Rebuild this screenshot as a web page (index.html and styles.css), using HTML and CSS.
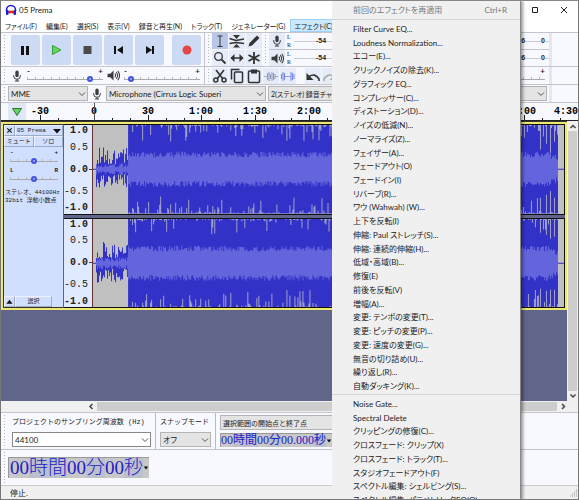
FILE: index.html
```html
<!DOCTYPE html>
<html lang="ja">
<head>
<meta charset="utf-8">
<title>05 Prema</title>
<link rel="stylesheet" href="styles.css">
</head>
<body>
<svg class="defs" aria-hidden="true">
  <symbol id="mic" viewBox="0 0 12 14"><rect x="4" y="0.5" width="4" height="8" rx="2" fill="#3c3c3c"/><path d="M2 6v1a4 4 0 0 0 8 0V6M6 11v2M3.5 13h5" fill="none" stroke="#3c3c3c" stroke-width="1.2"/></symbol>
  <symbol id="speaker" viewBox="0 0 14 12"><path d="M0.5 4h3L7 0.5v11L3.5 8h-3z" fill="#3c3c3c"/><path d="M8.5 4q1.5 2 0 4M10 2.3q3 3.700 0 7.400M11.600 0.800q4 5.200 0 10.400" fill="none" stroke="#3c3c3c" stroke-width="1.100"/></symbol>
  <symbol id="chevron" viewBox="0 0 8 8"><path d="M1 2.500l3 3 3-3" fill="none" stroke="#555" stroke-width="1"/></symbol>
</svg>

<header class="titlebar">
  <svg class="logo" viewBox="0 0 12 12"><path d="M1.500 7V6a4.500 4.500 0 0 1 9 0v1" fill="none" stroke="#1a1ae0" stroke-width="1.600"/><path d="M3 8l1.500-2 1.500 1 1.500-1L9 8l-1.500 2L6 9l-1.500 1z" fill="#f70"/><path d="M3 8h6" stroke="#e11" stroke-width="1.500"/><rect x="1" y="6" width="2.500" height="5" rx="1" fill="#1a1ae0"/><rect x="8.500" y="6" width="2.500" height="5" rx="1" fill="#1a1ae0"/></svg>
  <span class="title">05 Prema</span>
  <button class="win" aria-label="最小化"><svg viewBox="0 0 8 8"><path d="M0.500 4h7" stroke="#222" fill="none"/></svg></button>
  <button class="win" aria-label="最大化"><svg viewBox="0 0 8 8"><path d="M1.500 1.500h5v5h-5z" stroke="#222" fill="none"/></svg></button>
  <button class="win" aria-label="閉じる"><svg viewBox="0 0 8 8"><path d="M1 1l6 6M7 1L1 7" stroke="#222" fill="none"/></svg></button>
</header>

<nav class="menubar">
  <button>ファイル(F)</button><button>編集(E)</button><button>選択(S)</button><button>表示(V)</button><button>録音と再生(N)</button><button>トラック(T)</button><button>ジェネレーター(G)</button><button class="open">エフェクト(C)</button>
</nav>

<section class="tools">
  <div class="left">
    <div class="transport">
      <i class="grip"></i>
      <button aria-label="一時停止"><svg viewBox="0 0 29 30"><path d="M10 11h3v9h-3zM15 11h3v9h-3z" fill="#111"/></svg></button>
      <button aria-label="再生"><svg viewBox="0 0 29 30"><path d="M10.500 10.500v9l8.500-4.500z" fill="#63d663" stroke="#3a9c3a"/></svg></button>
      <button aria-label="停止"><svg viewBox="0 0 29 30"><path d="M10.500 11h8v8h-8z" fill="#4c4c4c"/></svg></button>
      <button aria-label="先頭へ"><svg viewBox="0 0 29 30"><path d="M10 11h2v8h-2zM19 11v8l-6-4z" fill="#111"/></svg></button>
      <button aria-label="末尾へ"><svg viewBox="0 0 29 30"><path d="M17 11h2v8h-2zM11 11v8l6-4z" fill="#111"/></svg></button>
      <button class="rec" aria-label="録音"><svg viewBox="0 0 29 30"><circle cx="15" cy="15" r="4.500" fill="#e54545"/></svg></button>
    </div>
    <div class="mixer">
      <i class="grip"></i>
      <svg class="i-mic"><use href="#mic"/></svg>
      <label class="slide"><span>-</span><span>+</span><input type="range" min="0" max="100" value="86" aria-label="録音レベル"></label>
      <svg class="i-spk"><use href="#speaker"/></svg>
      <label class="slide"><span>-</span><span>+</span><input type="range" min="0" max="100" value="5" aria-label="再生レベル"></label>
    </div>
  </div>
  <div class="right">
    <div class="upper">
      <i class="grip"></i>
      <div class="toolgrid">
        <button class="on" aria-label="選択ツール"><svg viewBox="0 0 16 16"><path d="M5.500 3h5M5.500 13.500h5M8 3v10.500" stroke="#333" fill="none"/></svg></button>
        <button aria-label="エンベロープ"><svg viewBox="0 0 16 16"><path d="M0.500 5.500L7 7.500 15 6M0.500 10.500l6.500-1 8 1" stroke="#333" stroke-width="1.500" fill="none"/><path d="M4 2h7L7.500 6zM4 14.500h7L7.500 11z" fill="#333"/></svg></button>
        <button aria-label="ドロー"><svg viewBox="0 0 16 16"><path d="M2.500 13.500l1-3.500L11 2.500l2.500 2.500L6 12.500z" fill="#333"/></svg></button>
        <button aria-label="ズーム"><svg viewBox="0 0 16 16"><circle cx="6.500" cy="6.500" r="3.800" stroke="#333" stroke-width="1.300" fill="none"/><path d="M9.500 9.500l4 4" stroke="#333" stroke-width="1.800"/></svg></button>
        <button aria-label="タイムシフト"><svg viewBox="0 0 16 16"><path d="M2 8h12" stroke="#333" stroke-width="1.500"/><path d="M1.500 8l4-4v8zM14.500 8l-4-4v8z" fill="#333"/></svg></button>
        <button aria-label="マルチツール"><svg viewBox="0 0 16 16"><path d="M8 2v12M2.500 5l11 6M13.500 5l-11 6" stroke="#333" stroke-width="1.800" fill="none"/></svg></button>
      </div>
      <i class="grip"></i>
      <div class="meters">
        <div class="meter"><button aria-label="録音メーター"><svg class="i-mic"><use href="#mic"/></svg></button><span class="lr"><b>L</b><b>R</b></span><span class="scale"><em>-54</em><em>-6</em><em>0</em></span></div>
        <div class="meter"><button aria-label="再生メーター"><svg class="i-spk"><use href="#speaker"/></svg></button><span class="lr"><b>L</b><b>R</b></span><span class="scale"><em>-54</em><em>-6</em><em>0</em></span></div>
      </div>
      <i class="edge"></i>
    </div>
    <div class="edit">
      <i class="grip"></i>
      <button aria-label="切り取り"><svg viewBox="0 0 16 16"><path d="M4 2l7 9M12 2L5 11" stroke="#333" stroke-width="1.600"/><circle cx="3.800" cy="12" r="2" stroke="#333" stroke-width="1.500" fill="none"/><circle cx="12" cy="12" r="2" stroke="#333" stroke-width="1.500" fill="none"/></svg></button>
      <button aria-label="コピー"><svg viewBox="0 0 16 16"><path d="M2.500 11.500v-10h8" stroke="#333" stroke-width="1.500" fill="none"/><rect x="5.500" y="4" width="8" height="10.500" rx="1" stroke="#333" stroke-width="1.500" fill="none"/></svg></button>
      <button aria-label="貼り付け"><svg viewBox="0 0 16 16"><rect x="2.500" y="3" width="11" height="11.500" rx="1" stroke="#333" stroke-width="1.500" fill="none"/><path d="M5 1.500h6v4H5z" fill="#333"/></svg></button>
      <button aria-label="トリム"><svg viewBox="0 0 16 16"><path d="M1 8.500h3M12 8.500h3" stroke="#aab"/><path d="M4.500 5v7M6 4v9M7.500 6v5M9 4v9M10.500 5v7M12 6v5" stroke="#8e96b8"/></svg></button>
      <button aria-label="無音化"><svg viewBox="0 0 16 16"><path d="M5 8.500h6" stroke="#99c"/><path d="M1.500 6v5M3 4v9M4.500 5v7M11 4v9M12.500 5v7M14 6v5" stroke="#7484e6"/></svg></button>
      <button class="undo" aria-label="元に戻す"><svg viewBox="0 0 16 16"><path d="M4 8.500q6-4 10 2.500v2" stroke="#333" stroke-width="1.600" fill="none"/><path d="M1.500 5v7h7z" fill="#333"/></svg></button>
      <button aria-label="やり直す"><svg viewBox="0 0 16 16"><path d="M12 8.500Q6 4.500 2 11v2" stroke="#aaa" stroke-width="1.600" fill="none"/><path d="M14.500 5v7h-7z" fill="#aaa"/></svg></button>
      <label class="slide long"><span>-</span><span>+</span><input type="range" min="0" max="100" value="30" aria-label="再生速度"></label>
      <i class="edge"></i>
    </div>
  </div>
</section>

<section class="devices">
  <i class="grip"></i>
  <span class="combo host"><select aria-label="オーディオホスト"><option>MME</option></select><svg><use href="#chevron"/></svg></span>
  <svg class="i-mic"><use href="#mic"/></svg>
  <span class="combo input"><select aria-label="録音デバイス"><option>Microphone (Cirrus Logic Superi</option></select><svg><use href="#chevron"/></svg></span>
  <span class="combo chan"><select aria-label="録音チャンネル"><option>2(ステレオ) 録音チャン</option></select><svg><use href="#chevron"/></svg></span>
  <span class="combo out"><select aria-label="再生デバイス"><option></option></select><svg><use href="#chevron"/></svg></span>
  <i class="edge"></i>
</section>

<section class="timeline">
  <button aria-label="再生ヘッドを固定"><svg viewBox="0 0 12 12"><path d="M1.500 2.500h9L6 9.500z" fill="#63d663" stroke="#2d702d"/></svg></button>
  <svg class="ruler" id="ruler"></svg>
</section>

<main class="workspace">
  <div class="canvas">
    <article class="track">
      <div class="panel">
        <div class="prow"><button class="sq" aria-label="トラックを閉じる"><svg viewBox="0 0 8 8"><path d="M1.500 1.500l5 5M6.500 1.500l-5 5" stroke="#111" stroke-width="1.200"/></svg></button><button class="name">05 Prema<svg viewBox="0 0 8 8"><path d="M0 2h8L4 6.500z" fill="#111"/></svg></button></div>
        <div class="prow"><button class="half">ミュート</button><button class="half">ソロ</button></div>
        <label class="slide"><span>-</span><span>+</span><input type="range" min="0" max="100" value="49" aria-label="ゲイン"></label>
        <label class="slide"><span>L</span><span>R</span><input type="range" min="0" max="100" value="49" aria-label="パン"></label>
        <p>ステレオ、44100Hz<br>32bit 浮動小数点</p>
        <div class="prow foot"><button class="sq" aria-label="折りたたむ"><svg viewBox="0 0 8 8"><path d="M0.500 6.500h7L4 2z" fill="#111"/></svg></button><button class="sel">選択</button></div>
      </div>
      <div class="channels">
        <div class="channel"><div class="vscale"><b>1.0</b><span>0.5</span><b class="mid">0.0</b><span>-0.5</span><b>-1.0</b></div><svg class="wave" viewBox="0 0 471 90" preserveAspectRatio="none"></svg></div>
        <div class="channel"><div class="vscale"><b>1.0</b><span>0.5</span><b class="mid">0.0</b><span>-0.5</span><b>-1.0</b></div><svg class="wave" viewBox="0 0 471 90" preserveAspectRatio="none"></svg></div>
      </div>
    </article>
  </div>
  <div class="vscroll"><svg viewBox="0 0 8 8"><path d="M1.500 5.500L4 3l2.500 2.500" fill="none" stroke="#444" stroke-width="1.500"/></svg><i></i><svg viewBox="0 0 8 8"><path d="M1.500 3L4 5.500 6.500 3" fill="none" stroke="#444" stroke-width="1.500"/></svg></div>
</main>
<div class="hscroll"><svg viewBox="0 0 8 8"><path d="M5.500 1.500L3 4l2.500 2.500" fill="none" stroke="#444" stroke-width="1.500"/></svg><i></i><svg viewBox="0 0 8 8"><path d="M3 1.500L5.500 4 3 6.500" fill="none" stroke="#444" stroke-width="1.500"/></svg></div>

<section class="selection">
  <i class="grip"></i>
  <div class="field rate"><label for="rate">プロジェクトのサンプリング周波数 (Hz)</label><span class="combo white"><select id="rate"><option>44100</option></select><svg><use href="#chevron"/></svg></span></div>
  <div class="field snap"><label for="snap">スナップモード</label><span class="combo"><select id="snap"><option>オフ</option></select><svg><use href="#chevron"/></svg></span></div>
  <div class="field range"><span class="combo"><select aria-label="選択範囲"><option>選択範囲の開始点と終了点</option></select><svg><use href="#chevron"/></svg></span><output class="time">00<u>時間</u>00<u>分</u>00.000<u>秒</u><svg viewBox="0 0 8 8"><path d="M1 2h6L4 6z" fill="#111"/></svg></output></div>
</section>
<section class="position">
  <i class="grip"></i>
  <output class="time big">00<u>時間</u>00<u>分</u>00<u>秒</u><svg viewBox="0 0 8 8"><path d="M1 2h6L4 6z" fill="#111"/></svg></output>
</section>
<footer class="status"><span>停止.</span><svg viewBox="0 0 8 8"><path d="M6 1h1M4 3h1M6 3h1M2 5h1M4 5h1M6 5h1M0 7h1M2 7h1M4 7h1M6 7h1" stroke="#999"/></svg></footer>

<div class="menu" role="menu">
  <button class="repeat" role="menuitem" disabled><span>前回のエフェクトを再適用</span><span>Ctrl+R</span></button>
  <div class="group main-group">
    <button role="menuitem">Filter Curve EQ...</button>
    <button role="menuitem">Loudness Normalization...</button>
    <button role="menuitem">エコー(E)...</button>
    <button role="menuitem">クリックノイズの除去(K)...</button>
    <button role="menuitem">グラフィック EQ...</button>
    <button role="menuitem">コンプレッサー(C)...</button>
    <button role="menuitem">ディストーション(D)...</button>
    <button role="menuitem">ノイズの低減(N)...</button>
    <button role="menuitem">ノーマライズ(Z)...</button>
    <button role="menuitem">フェイザー(A)...</button>
    <button role="menuitem">フェードアウト(O)</button>
    <button role="menuitem">フェードイン(I)</button>
    <button role="menuitem">リバーブ(R)...</button>
    <button role="menuitem">ワウ (Wahwah) (W)...</button>
    <button role="menuitem">上下を反転(I)</button>
    <button role="menuitem">伸縮: Paul ストレッチ(S)...</button>
    <button role="menuitem">伸縮: 連続的伸縮(H)...</button>
    <button role="menuitem">低域・高域(B)...</button>
    <button role="menuitem">修復(E)</button>
    <button role="menuitem">前後を反転(V)</button>
    <button role="menuitem">増幅(A)...</button>
    <button role="menuitem">変更: テンポの変更(T)...</button>
    <button role="menuitem">変更: ピッチの変更(P)...</button>
    <button role="menuitem">変更: 速度の変更(G)...</button>
    <button role="menuitem">無音の切り詰め(U)...</button>
    <button role="menuitem">繰り返し(R)...</button>
    <button role="menuitem">自動ダッキング(K)...</button>
  </div>
  <div class="group plug-group">
    <button role="menuitem">Noise Gate...</button>
    <button role="menuitem">Spectral Delete</button>
    <button role="menuitem">クリッピングの修復(C)...</button>
    <button role="menuitem">クロスフェード: クリップ(X)</button>
    <button role="menuitem">クロスフェード: トラック(T)...</button>
    <button role="menuitem">スタジオフェードアウト(F)</button>
    <button role="menuitem">スペクトル編集: シェルビング(S)...</button>
    <button role="menuitem">スペクトル編集: パラメトリックEQ(Q)...</button>
  </div>
</div>
<script src="wave.js"></script>
</body>
</html>
```
FILE: wave.js
```js
const NS = "http://www.w3.org/2000/svg";

function add(parent, tag, attrs, text) {
  const node = document.createElementNS(NS, tag);
  for (const key in attrs) node.setAttribute(key, attrs[key]);
  if (text) node.textContent = text;
  parent.appendChild(node);
}

function random(seed) {
  let s = seed;
  return () => (s = (s * 16807) % 2147483647) / 2147483647;
}

function drawRuler(svg) {
  const labels = { 0: "-30", 1: "0", 2: "30", 3: "1:00", 4: "1:30", 5: "2:00", 9: "4:00", 10: "4:30" };
  const start = 14;
  const step = 53.8;
  let ticks = "";
  for (let i = 0; i <= 10; i++) {
    const x = Math.round(start + i * step);
    if (labels[i]) add(svg, "text", { x: i === 10 ? x - 12 : x, y: 11, "text-anchor": "middle" }, labels[i]);
    ticks += `M${x + 0.5} 12V17`;
    for (let k = 1; k < 3; k++) ticks += `M${Math.round(x + (k * step) / 3) + 0.5} 15V17`;
  }
  add(svg, "path", { d: ticks, stroke: "#222" });
  add(svg, "path", { d: `M${Math.round(start + step) + 0.5} 0V17`, stroke: "#555" });
}

function drawWave(svg, seed) {
  const rnd = random(seed);
  const begin = 36;
  const end = 465;
  const mid = 45;
  let peak = "";
  let rms = "";
  let gaps = "";
  for (let x = 4; x < begin; x++) {
    const up = 5 + Math.pow(rnd(), 1.4) * 17;
    const down = 5 + Math.pow(rnd(), 1.4) * 15;
    peak += `M${x + 0.5} ${(mid - up).toFixed(1)}V${(mid + down).toFixed(1)}`;
    const r = 2 + rnd() * 4;
    rms += `M${x + 0.5} ${(mid - r).toFixed(1)}V${(mid + r).toFixed(1)}`;
  }
  for (let x = begin; x < end; x++) {
    const fade = x > 455 ? (x - 455) / 2 : 0;
    const up = 12 + rnd() * 6 - fade;
    const down = 12 + rnd() * 6 - fade;
    rms += `M${x + 0.5} ${(mid - up).toFixed(1)}V${(mid + down).toFixed(1)}`;
    if (rnd() > 0.62) gaps += `M${x + 0.5} 0V${(1 + Math.pow(rnd(), 4) * 16).toFixed(1)}`;
    if (rnd() > 0.6) gaps += `M${x + 0.5} 90V${(89 - Math.pow(rnd(), 3) * 17).toFixed(1)}`;
  }
  for (const x of [447, 453, 457, 461]) {
    gaps += `M${x + 0.5} 0V${Math.round(12 + rnd() * 18)}M${x + 0.5} 90V${Math.round(76 - rnd() * 12)}`;
  }
  add(svg, "path", { d: peak, stroke: "#3232c8" });
  add(svg, "rect", { x: begin, y: 0, width: end - begin, height: 90, fill: "#3232c8" });
  add(svg, "path", { d: gaps, stroke: "#a0a0c8" });
  add(svg, "path", { d: rms, stroke: "#6464dc" });
  add(svg, "path", { d: `M0 45H4M${end} 45H471`, stroke: "#3232c8" });
  add(svg, "path", { d: "M0.5 0V90", stroke: "#633" });
}

drawRuler(document.getElementById("ruler"));
document.querySelectorAll(".wave").forEach((svg, i) => drawWave(svg, 4211 + i * 977));
```
FILE: styles.css
```css
* { box-sizing: border-box; }
body {
  margin: 0;
  height: 100vh;
  display: flex;
  flex-direction: column;
  overflow: hidden;
  position: relative;
  background: #fff;
  border: 1px solid #777;
  border-top-color: #888;
  color: #222;
  font: 8px/12px "Lato", "Noto Sans CJK JP", sans-serif;
  font-feature-settings: "palt";
}
button, select, input, output { font: inherit; font-feature-settings: inherit; color: inherit; margin: 0; }
button { border: 0; padding: 0; background: none; white-space: nowrap; }
svg { display: block; flex: none; }
.defs { position: absolute; width: 0; height: 0; }

.titlebar { display: flex; align-items: center; height: 18px; padding-left: 4px; flex: none; }
.logo { width: 12px; height: 12px; }
.title { margin-left: 2px; flex: 1; }
.win { width: 29px; display: flex; justify-content: center; }
.win svg { width: 8px; height: 8px; }
.menubar { display: flex; height: 13px; flex: none; font-size: 7px; }
.menubar button { padding: 0 5px 0 4px; }
.menubar .open { background: #cce8ff; box-shadow: inset 0 0 0 1px #99d1ff; }

.grip { width: 4px; align-self: stretch; margin: 1px 1px 1px 2px; flex: none; background: radial-gradient(circle, #b4b4bc 1px, transparent 1px) 0 0 / 3px 3px; }
.edge { width: 29px; flex: none; align-self: stretch; border-left: 3px solid #e6e6ee; }
.i-mic { width: 10px; height: 12px; }
.i-spk { width: 13px; height: 11px; }

.tools { display: flex; flex: none; background: #f8f9ff; border-top: 1px solid #c4c4cc; }
.left { width: 204px; flex: none; border-right: 1px solid #c4c4cc; }
.transport { display: flex; align-items: center; gap: 2px; height: 34px; border-bottom: 1px solid #c4c4cc; }
.transport .grip { margin-right: 2px; }
.transport button { width: 29px; height: 30px; background: #cddaf3; border-radius: 2px; }
.transport .rec { margin-left: 6px; }
.mixer { display: flex; align-items: center; height: 17px; }
.mixer .i-mic { margin: 0 5px 0 4px; }
.mixer .i-spk { margin: 0 4px; }

.slide { display: grid; grid-template-columns: 1fr 1fr; width: 76px; height: 15px; line-height: 6px; font-weight: bold; }
.slide span + span { text-align: right; }
.slide input { grid-column: 1 / 3; appearance: none; width: 100%; height: 8px; background: none; }
.slide input::-webkit-slider-runnable-track { height: 6px; background: linear-gradient(#aaa, #aaa) 0 3px / 100% 1px no-repeat, repeating-linear-gradient(90deg, #bbb 0 1px, transparent 1px 8px) 0 1px / 100% 2px no-repeat; }
.slide input::-webkit-slider-thumb { appearance: none; width: 6px; height: 6px; border-radius: 50%; background: #aab4f4; border: 2px solid #4452e0; }

.right { flex: 1; min-width: 0; }
.upper { display: flex; height: 34px; border-bottom: 1px solid #c4c4cc; }
.toolgrid { display: grid; grid-template-columns: repeat(3, 16px); grid-template-rows: repeat(2, 16px); gap: 1px; }
.toolgrid button, .meter button, .edit button { background: #e6ebf8; width: 16px; height: 16px; display: grid; place-items: center; }
.toolgrid .on { background: #b9c8ea; }
.meters { flex: 1; display: flex; flex-direction: column; min-width: 0; }
.meter { flex: 1; display: flex; align-items: center; }
.meter + .meter { border-top: 1px solid #c4c4cc; }
.lr { width: 9px; display: flex; flex-direction: column; justify-content: space-between; align-self: stretch; font: 6px/8px "Liberation Serif", serif; padding-left: 2px; }
.lr b { font-weight: normal; }
.scale { flex: 1; display: flex; font: bold 7px/8px "Liberation Sans", sans-serif; background: linear-gradient(#c8ccd4, #c8ccd4) 0 50% / 100% 1px no-repeat; padding: 0 4px 0 22px; }
.scale em { font-style: normal; background: #f8f9ff; }
.scale em:nth-child(2) { margin: 0 16px 0 auto; }
.edit { display: flex; align-items: center; gap: 1px; height: 17px; }
.edit .grip { margin-right: 0; }
.edit .undo { margin-left: 8px; }
.edit .long { flex: 1; padding-right: 3px; }

.combo { display: flex; position: relative; height: 15px; background: #e4e4e4; border: 1px solid #b4b4b4; }
.combo select { appearance: none; width: 100%; min-width: 0; border: 0; border-radius: 0; padding: 0 10px 0 2px; background: none; line-height: 12px; }
.combo svg { position: absolute; right: 1px; top: 3px; width: 8px; height: 8px; pointer-events: none; }
.combo.white { background: #fff; border-color: #888; }
.devices { display: flex; align-items: center; gap: 2px; height: 19px; flex: none; background: #f8f9ff; border-top: 1px solid #c4c4cc; border-bottom: 1px solid #c4c4cc; }
.devices .grip { margin-right: -1px; }
.host { width: 80px; }
.devices .i-mic { margin: 0 2px; }
.input { width: 160px; }
.chan { width: 130px; font-size: 7px; }
.out { flex: 1; }

.timeline { display: flex; height: 18px; flex: none; background: #f8f9ff; padding-left: 7px; border-bottom: 1px solid #222; }
.timeline button { width: 18px; background: #dfe7f8; display: grid; place-items: center; }
.timeline button svg { width: 12px; height: 12px; }
.ruler { flex: 1; margin-right: -1px; height: 17px; overflow: visible; font: bold 10px "Liberation Mono", monospace; margin-left: 0; }

.workspace { flex: 1; display: flex; min-height: 0; }
.canvas { flex: 1; min-width: 0; background: #60658a; border-top: 1px solid #333; }
.track { display: flex; height: 188px; background: #222; border: 2px solid #eee86e; }
.panel { width: 61px; flex: none; background: #d0dffe; display: flex; flex-direction: column; font: 6px/8px "Liberation Mono", "Noto Sans CJK JP", monospace; border: 1px solid #333; border-right-color: #666; font-feature-settings: normal; }
.prow { display: flex; }
.prow button { height: 11px; border: 1px solid #9cabc8; border-top-color: #eef; border-left-color: #eef; display: flex; align-items: center; justify-content: center; }
.prow svg { width: 7px; height: 7px; }
.prow .sq { width: 11px; }
.prow .name { flex: 1; justify-content: space-between; padding: 0 1px; }
.prow .name svg { width: 8px; height: 8px; }
.prow .half { flex: 1; }
.prow .sel { width: 37px; }
.panel .slide { width: 48px; margin: 3px 0 0 6px; }
.panel p { margin: 6px 0 0 1px; white-space: nowrap; }
.foot { margin-top: auto; }
.channels { flex: 1; display: flex; flex-direction: column; gap: 3px; background: #60658a; min-width: 0; }
.channel { flex: 1; display: flex; min-height: 0; border: solid #111; border-width: 1px 1px 1px 0; }
.vscale { width: 28px; flex: none; background: #dfe9ff; display: grid; grid-template-rows: 11px 1fr 1fr 1fr 11px; align-items: center; text-align: right; padding-right: 4px; font: 10px/11px "Liberation Mono", monospace; }
.vscale .mid { margin-right: -4px; padding-right: 4px; background: linear-gradient(#444, #444) 100% 50% / 3px 1px no-repeat; }
.wave { flex: 1; min-width: 0; height: 100%; background: #c0c0c0; }
.vscroll { width: 11px; display: flex; flex-direction: column; align-items: center; background: #f0f0f0; padding: 1px 0; }
.vscroll i { flex: 1; width: 9px; background: #cdcdcd; }
.vscroll svg, .hscroll svg { width: 8px; height: 9px; }
.hscroll { display: flex; align-items: center; height: 11px; flex: none; background: #f0f0f0; padding: 0 11px 0 86px; }
.hscroll i { flex: 1; height: 9px; background: #cdcdcd; margin: 0 2px; }

.selection { display: flex; height: 37px; flex: none; background: #f8f9ff; border-top: 1px solid #c4c4cc; }
.field { display: flex; flex-direction: column; justify-content: space-between; padding: 2px 4px; white-space: nowrap; }
.field label { line-height: 14px; font-family: "Liberation Mono", "Noto Sans CJK JP", monospace; font-size: 7px; font-feature-settings: normal; }
.field + .field { border-left: 1px solid #bbb; }
.rate { width: 147px; flex: none; }
.snap { width: 60px; flex: none; }
.range { width: 240px; flex: none; }
.range .combo { font-size: 7px; font-feature-settings: normal; }
.time { display: flex; align-items: center; align-self: flex-start; height: 14px; background: #c8c8c8; border: 1px solid #999; border-right: 0; border-bottom: 0; color: #2020c8; font: 12px/13px "Liberation Serif", "Noto Sans CJK JP", serif; font-feature-settings: normal; white-space: nowrap; }
.time u { text-decoration: none; background: #bcc0cc; }
.time svg { width: 6px; height: 6px; }
.position { display: flex; align-items: center; height: 36px; flex: none; background: #f8f9ff; border-top: 1px solid #c4c4cc; }
.big { height: 21px; font-size: 19px; line-height: 20px; padding-left: 1px; align-self: center; }
.big u { font-weight: 300; }
.status { display: flex; align-items: center; justify-content: space-between; height: 14px; flex: none; background: #f0f0f0; border-top: 1px solid #ccc; padding-left: 9px; }
.status svg { width: 8px; height: 8px; }

.menu { position: absolute; left: 331px; top: 0; width: 188px; bottom: -1px; overflow: hidden; background: #f0f0f0; box-shadow: 1px 0 0 #888, 3px 0 3px #0006; display: flex; flex-direction: column; }
.menu button { text-align: left; padding-left: 21px; }
.menu .repeat { height: 18px; flex: none; display: flex; justify-content: space-between; align-items: center; color: #777; padding-right: 13px; }
.group { display: grid; grid-auto-rows: minmax(0, 1fr); flex: none; position: relative; border-top: 1px solid #d4d4d4; padding-top: 2px; }
.main-group { height: 374px; }
.plug-group { height: 113px; margin-top: 1px; }
```
